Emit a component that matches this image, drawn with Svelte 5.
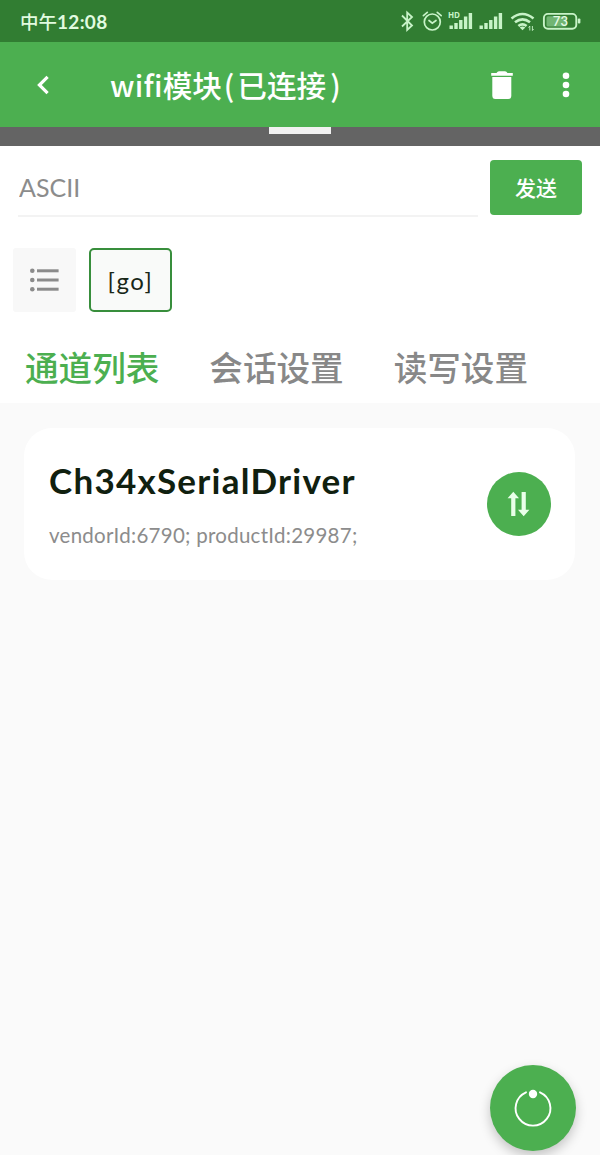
<script>
  let tabs = ["通道列表", "会话设置", "读写设置"];
  let activeTab = $state(0);
  let message = $state("");

  let channels = [
    { name: "Ch34xSerialDriver", info: "vendorId:6790; productId:29987;" },
  ];

  const bars = [3.5, 6, 9, 12.5, 16];
</script>

{#snippet signal()}
  {#each bars as h, i}
    <rect x={i * 4.8} y={16.5 - h} width="3.4" height={h} />
  {/each}
{/snippet}

<div class="screen">
  <div class="status-bar">
    <span class="time">中午<span class="digits">12:08</span></span>
    <svg width="182" height="24" viewBox="399 9 182 24" fill="#c8f3c8" stroke="none">
      <path d="M402 15.5 L412 25.5 L407.2 30 V12.5 L412 17 L402 26.5" fill="none" stroke="#c8f3c8" stroke-width="1.8" />
      <g fill="none" stroke="#c8f3c8" stroke-width="1.7" stroke-linecap="round">
        <circle cx="432.3" cy="22" r="8" />
        <path d="M423.4 15.6 L427.3 12.4 M437.3 12.4 L441.2 15.6 M429 20.5 L432.3 23.2 L436 20.5" />
      </g>
      <text x="448" y="18" class="hd">HD</text>
      <g transform="translate(449.5 12.5)">{@render signal()}</g>
      <g transform="translate(479.5 12.5)">{@render signal()}</g>
      <g fill="none" stroke="#c8f3c8" stroke-width="2.6">
        <path d="M511.5 18.5 Q522.5 9.5 533.5 18.5" />
        <path d="M515 22.3 Q522.5 16.3 530 22.3" />
        <path d="M518.4 26 Q522.5 22.6 526.6 26" />
      </g>
      <path d="M519.7 27.4 Q522.5 25.6 525.3 27.4 L522.5 30.2Z" />
      <path d="M529.8 30.5 V26 L528.6 27.6 M532.4 26 V30.5 L533.6 29" fill="none" stroke="#c8f3c8" stroke-width="0.9" />
      <rect x="543.9" y="13.9" width="32.4" height="14.9" rx="4" fill="none" stroke="#c8f3c8" stroke-width="1.9" />
      <rect x="546.5" y="16.3" width="20" height="10.2" rx="1.5" fill="#71b573" />
      <rect x="577.8" y="18.5" width="2.6" height="5" rx="1" />
      <text x="560.4" y="26" class="battery">73</text>
    </svg>
  </div>

  <header>
    <button class="back" aria-label="返回">
      <svg width="14" height="20" viewBox="0 0 14 20"><path d="M11.6 1.8 L3.4 10 L11.6 18.2" fill="none" stroke="#fff" stroke-width="3.2" /></svg>
    </button>
    <h1><span class="latin">wifi</span>模块<span class="paren">(</span>已连接<span class="paren end">)</span></h1>
    <button class="delete" aria-label="删除">
      <svg width="22" height="28" viewBox="0 0 22 28" fill="#fff">
        <path d="M0.2 2 H5.5 Q6.5 0.2 8 0.2 H14 Q15.5 0.2 16.5 2 H21.8 V4.8 H0.2Z" />
        <path d="M1.3 6.1 H20.3 V24.5 Q20.3 28 17.3 28 H4.3 Q1.3 28 1.3 24.5Z" />
      </svg>
    </button>
    <button class="more" aria-label="更多">
      <svg width="8" height="26" viewBox="0 0 8 26" fill="#fff">
        <circle cx="4" cy="3.8" r="3.3" />
        <circle cx="4" cy="13" r="3.3" />
        <circle cx="4" cy="22" r="3.3" />
      </svg>
    </button>
  </header>

  <div class="drag-bar"><span></span></div>

  <div class="composer">
    <input placeholder="ASCII" bind:value={message} />
    <button class="send">发送</button>
  </div>

  <div class="shortcuts">
    <button class="list" aria-label="列表">
      <svg width="30" height="24" viewBox="0 0 30 24" fill="#8b8b8b">
        {#each [2.8, 12, 21.2] as y}
          <circle cx="2.3" cy={y} r="2.3" />
          <rect x="7" y={y - 1.5} width="21.6" height="3" />
        {/each}
      </svg>
    </button>
    <button class="command">[go]</button>
  </div>

  <nav>
    {#each tabs as tab, i}
      <button class:active={i === activeTab} onclick={() => (activeTab = i)}>{tab}</button>
    {/each}
  </nav>

  <main>
    {#each channels as channel}
      <div class="card">
        <div class="details">
          <h2>{channel.name}</h2>
          <p>{channel.info}</p>
        </div>
        <button class="transfer" aria-label="连接">
          <svg width="24" height="26" viewBox="0 0 24 26" fill="#e9ffe9">
            <path d="M6.3 0.8 L12 7.2 H8.4 V25 H4.2 V7.2 H0.6Z" />
            <path d="M16.7 25.2 L11 18.8 H14.6 V1 H18.8 V18.8 H22.4Z" />
          </svg>
        </button>
      </div>
    {/each}
  </main>

  <button class="fab" aria-label="断开">
    <svg width="40" height="40" viewBox="0 0 40 40">
      <path d="M13 4.3 A17.4 17.4 0 1 0 27 4.3" fill="none" stroke="#fff" stroke-width="1.9" stroke-linecap="round" />
      <circle cx="20" cy="6" r="4.2" fill="#fff" />
    </svg>
  </button>
</div>

<style>
  :global(body) { background: #fafafa; }
  .screen {
    position: relative;
    display: flex;
    flex-direction: column;
    height: 1155px;
    overflow: hidden;
    background: #fafafa;
    font-family: "Noto Sans CJK SC", sans-serif;
  }
  button {
    display: flex; align-items: center; justify-content: center;
    padding: 0; border: none; background: none;
    font-family: inherit; cursor: pointer; flex-shrink: 0;
  }
  svg { display: block; flex-shrink: 0; }

  .status-bar {
    display: flex; align-items: center; justify-content: space-between;
    height: 42px; padding: 0 19px 0 20px; background: #317d32; flex-shrink: 0;
  }
  .time { color: #e2fbe0; font-size: 18.5px; font-weight: 500; line-height: 40px; white-space: nowrap; }
  .digits { font-family: Lato, sans-serif; font-weight: 700; font-size: 19px; letter-spacing: 0.3px; }
  .hd { font: 700 8px "Open Sans", sans-serif; }
  .battery { font: 600 13px Lato, sans-serif; text-anchor: middle; fill: #e5fbe5; }

  header {
    display: flex; align-items: center;
    height: 85px; padding: 0 28px 0 35px; background: #4caf50; flex-shrink: 0;
  }
  .back { width: 16px; height: 40px; }
  h1 {
    flex: 1; margin: 0 0 0 59px; color: #fff;
    font-size: 29.6px; font-weight: 500; line-height: 85px; white-space: nowrap;
  }
  .latin { letter-spacing: 0.2px; }
  .paren { margin: 0 3px 0 2px; }
  .paren.end { margin-left: 4px; }
  .delete { width: 24px; height: 40px; }
  .more { width: 12px; height: 40px; margin-left: 46px; }

  .drag-bar {
    display: flex; justify-content: center;
    height: 19px; background: #646464; flex-shrink: 0;
  }
  .drag-bar span { width: 62px; height: 7px; background: #f1f1f1; }

  .composer {
    display: flex; align-items: flex-start; gap: 12px;
    box-sizing: border-box; height: 102px; padding: 14px 18px 0; background: #fff; flex-shrink: 0;
  }
  input {
    flex: 1; min-width: 0; height: 53px; padding: 0 0 2px 1px; box-sizing: content-box;
    border: none; border-bottom: 2px solid #f3f3f3; outline: none; background: none;
    color: #333; font: 25px Lato, sans-serif;
  }
  input::placeholder { color: #8c8c8c; opacity: 1; }
  .send {
    width: 92px; height: 55px; padding: 0 0 2px; border-radius: 4px;
    background: #4caf50; color: #fff; font-size: 21px; font-weight: 500;
  }

  .shortcuts {
    display: flex; gap: 13px; height: 83px; padding-left: 13px;
    background: #fff; flex-shrink: 0; align-items: flex-start;
  }
  .list { width: 63px; height: 64px; background: #f8f8f8; border-radius: 3px; }
  .command {
    width: 83px; height: 64px; box-sizing: border-box;
    border: 2px solid #388e3c; border-radius: 5px; background: #f9faf9;
    color: #182618; font: 24px Lato, sans-serif; letter-spacing: 1.5px;
  }

  nav {
    display: flex; gap: 50px; height: 72px; padding-left: 25px;
    background: #fff; flex-shrink: 0;
  }
  nav button {
    align-items: flex-start; color: #888;
    font-size: 33.6px; font-weight: 500; line-height: 71px; height: 72px;
  }
  nav .active { color: #4caf50; }

  main { flex: 1; padding: 25px 25px 0 24px; }
  .card {
    display: flex; align-items: center; justify-content: space-between;
    box-sizing: border-box; height: 152px; padding: 0 24px 0 25px;
    border-radius: 28px; background: #fff;
  }
  .details { padding-top: 8px; font-family: Lato, sans-serif; white-space: nowrap; }
  h2 { margin: 0; color: #10200f; font-size: 35px; font-weight: 700; line-height: 54px; letter-spacing: 1.25px; }
  p { margin: 0; color: #8c8c8c; font-size: 20.5px; line-height: 56px; letter-spacing: 0.27px; }
  .transfer { width: 64px; height: 64px; border-radius: 50%; background: #4caf50; }

  .fab {
    position: absolute; right: 24px; bottom: 4px;
    width: 86px; height: 86px; border-radius: 50%; background: #4caf50;
    box-shadow: 0 5px 12px rgba(0, 0, 0, 0.22);
  }
</style>
